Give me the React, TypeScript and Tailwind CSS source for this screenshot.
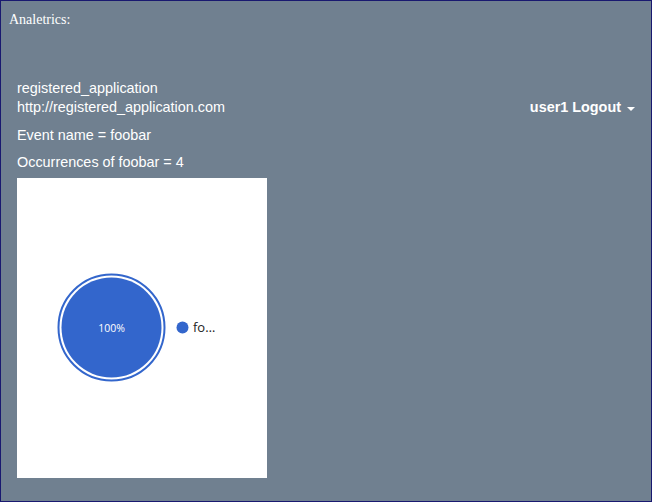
import React from "react";

const App: React.FC = () => {
  return (
    <div className="h-[502px] w-[652px] bg-[#708090] border border-[#191970] overflow-hidden font-['Liberation_Sans',Arial,sans-serif] text-white">
      {/* Title */}
      <div className="pl-[8px] pt-[9px] font-['Liberation_Serif','Times_New_Roman',serif] text-[14px] leading-[20px]">
        Analetrics:
      </div>

      {/* App header */}
      <div className="px-[16px] pt-[49px]">
        <div className="flex items-end justify-between text-[14.4px] leading-[19px]">
          <div>
            <div>registered_application</div>
            <div>http://registered_application.com</div>
          </div>
          <div className="flex items-center gap-[6px] font-bold">
            <span>user1 Logout</span>
            <span className="mt-[2px] h-0 w-0 border-l-[4px] border-r-[4px] border-t-[4px] border-l-transparent border-r-transparent border-t-white" />
          </div>
        </div>

        <div className="mt-[9px] text-[14.4px] leading-[19px]">Event name = foobar</div>
        <div className="mt-[8px] text-[14.4px] leading-[19px]">Occurrences of foobar = 4</div>

        {/* Chart */}
        <div className="mt-[6px] h-[300px] w-[250px] bg-white">
          <svg width="250" height="300" viewBox="0 0 250 300">
            <circle cx="94.5" cy="149.5" r="53" fill="none" stroke="#3366cc" strokeWidth="2" />
            <circle cx="94.5" cy="149.5" r="50" fill="#3366cc" />
            <text
              x="94.5"
              y="153.5"
              textAnchor="middle"
              fill="#ffffff"
              fontSize="10.5"
              fontFamily="'Open Sans', 'Liberation Sans', sans-serif"
            >
              100%
            </text>
            <circle cx="165.5" cy="149.5" r="6" fill="#3366cc" />
            <text
              x="176"
              y="154"
              fill="#222222"
              fontSize="13"
              fontFamily="'Open Sans', 'Liberation Sans', sans-serif"
            >
              fo…
            </text>
          </svg>
        </div>
      </div>
    </div>
  );
};

export default App;
